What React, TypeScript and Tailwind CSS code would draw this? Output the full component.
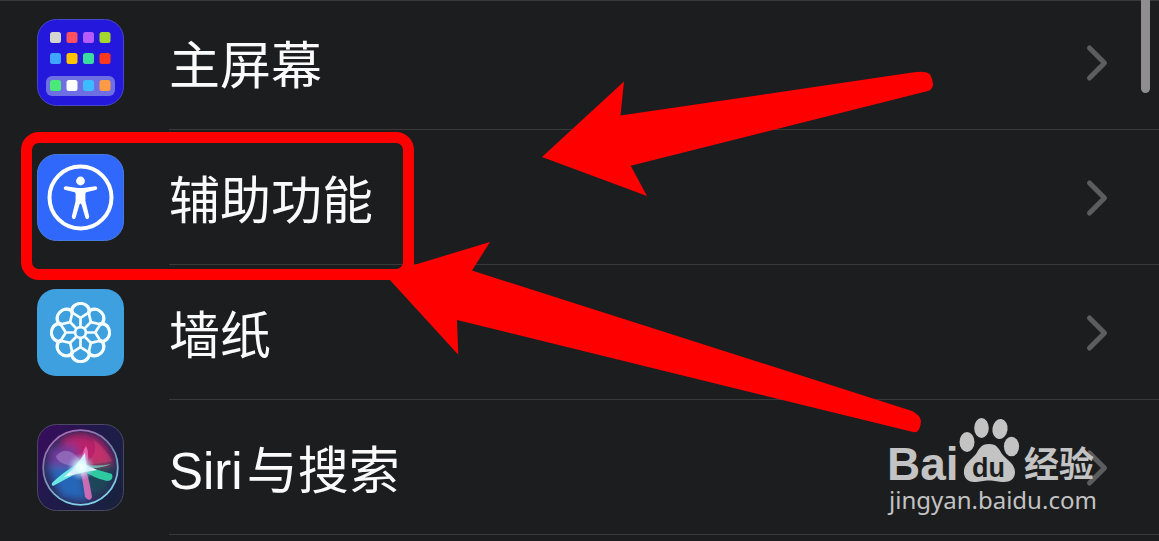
import type { ReactNode } from "react";

function HomeScreenIcon() {
  const colors = [
    ["#d3d6cf", "#ff4f62", "#b65cff", "#a3d82f"],
    ["#3fa6ff", "#ffc400", "#3bdca0", "#ff3a1c"],
    ["#4be87a", "#ffffff", "#3cbcff", "#ff9a45"],
  ];
  const tops = [13, 34, 61];
  return (
    <svg viewBox="0 0 87 87" className="size-full" aria-hidden="true">
      <rect x="0.5" y="0.5" width="86" height="86" rx="19" fill="#2418dc" stroke="#4648c8" />
      <rect x="9" y="57" width="69" height="20" rx="6" fill="#6f6fe4" />
      {colors.map((row, r) =>
        row.map((c, i) => (
          <rect key={`${r}-${i}`} x={13 + i * 16.5} y={tops[r]} width="11" height="11" rx="2.5" fill={c} />
        )),
      )}
    </svg>
  );
}

function AccessibilityIcon() {
  return (
    <svg viewBox="0 0 87 87" className="size-full" aria-hidden="true">
      <rect x="0.5" y="0.5" width="86" height="86" rx="19" fill="#2f68fb" stroke="#4a7ae0" />
      <circle cx="43.5" cy="43.5" r="31" fill="none" stroke="#fff" strokeWidth="4" />
      <circle cx="43.5" cy="27" r="4.4" fill="#fff" />
      <path
        d="M29 32.2 L39 33.8 Q43.5 34.4 48 33.8 L58 32.2 Q60.6 32.4 60.2 34.6 Q60 35.8 58.6 36.1 L49.2 38.3 Q48.4 38.7 48.4 40 V47 L52.2 62.6 Q52.2 65 50.3 65.2 Q48.9 65.2 48.4 63.8 L44.5 50.4 Q43.5 48.8 42.5 50.4 L38.6 63.8 Q38.1 65.2 36.7 65.2 Q34.8 65 34.8 62.6 L38.6 47 V40 Q38.6 38.7 37.8 38.3 L28.4 36.1 Q27 35.8 26.8 34.6 Q26.4 32.4 29 32.2 Z"
        fill="#fff"
      />
    </svg>
  );
}

function WallpaperIcon() {
  const angles = [0, 45, 90, 135, 180, 225, 270, 315];
  return (
    <svg viewBox="0 0 87 87" className="size-full" aria-hidden="true">
      <rect width="87" height="87" rx="19" fill="#3fa0df" />
      <g fill="none" stroke="#f4fdff" strokeWidth="2.7" strokeLinejoin="round">
        {angles.map((a) => (
          <path
            key={a}
            transform={`translate(43.5 43.5) rotate(${a})`}
            d="M0 -5.4 V-14.8 M-10.4 -10.4 L-8.5 -18.5 A8.7 8.7 0 1 1 8.5 -18.5 L10.4 -10.4"
          />
        ))}
        {angles.map((a) => (
          <path
            key={`lobe-${a}`}
            transform={`translate(43.5 43.5) rotate(${a})`}
            d="M-8.6 -19 C-10.4 -25 -6 -29 0 -29 S10.4 -25 8.6 -19"
          />
        ))}
        <circle r="5.4" cx="43.5" cy="43.5" />
      </g>
    </svg>
  );
}

function SiriIcon() {
  return (
    <svg viewBox="0 0 87 87" className="size-full" aria-hidden="true">
      <defs>
        <linearGradient id="siri-bg" x1="0" y1="0" x2="1" y2="0.7">
          <stop offset="0" stopColor="#3b0a5e" />
          <stop offset="0.5" stopColor="#201a4c" />
          <stop offset="1" stopColor="#19213f" />
        </linearGradient>
        <linearGradient id="siri-rim" x1="0" y1="0" x2="0.4" y2="1">
          <stop offset="0" stopColor="#bd65bd" />
          <stop offset="0.5" stopColor="#7382a5" />
          <stop offset="1" stopColor="#7dd2e6" />
        </linearGradient>
        <radialGradient id="siri-core">
          <stop offset="0" stopColor="#fff" />
          <stop offset="0.35" stopColor="#d9fffa" stopOpacity="0.85" />
          <stop offset="1" stopColor="#9af" stopOpacity="0" />
        </radialGradient>
        <filter id="siri-soft" x="-40%" y="-40%" width="180%" height="180%">
          <feGaussianBlur stdDeviation="4" />
        </filter>
        <filter id="siri-fine" x="-20%" y="-20%" width="140%" height="140%">
          <feGaussianBlur stdDeviation="0.7" />
        </filter>
        <clipPath id="siri-orb">
          <circle cx="43.5" cy="43.5" r="36" />
        </clipPath>
      </defs>
      <rect x="0.5" y="0.5" width="86" height="86" rx="19" fill="url(#siri-bg)" stroke="#4b4862" />
      <circle cx="43.5" cy="43.5" r="37" fill="#2c2556" />
      <g clipPath="url(#siri-orb)">
        <g filter="url(#siri-soft)">
          <path d="M22 16 Q45 2 66 18 L77 38 L45 42 Z" fill="#b8236a" />
          <path d="M12 24 L38 20 L44 43 L12 50 Z" fill="#6f3a9c" />
          <path d="M9 42 L43 42 L52 78 L24 74 Z" fill="#2566b8" />
          <path d="M43 43 L78 38 L72 66 L55 74 Z" fill="#1f4658" />
        </g>
        <g filter="url(#siri-fine)">
          <path d="M43 43 Q20 41 19 32 Q30 20 43 36 Z" fill="#b59ad6" opacity="0.45" />
          <path d="M44 42 Q62 40 75 37 Q70 26 56 15 Q64 30 44 42 Z" fill="#d2406f" opacity="0.45" />
          <path d="M42 43 Q46 26 49 22 Q53 28 49 45 Q53 60 55 73 Q53 79 48 73 Q46 56 42 43 Z" fill="#f174c0" opacity="0.8" />
          <path d="M44 40 Q60 46 75 50 Q77 57 70 57 Q56 54 44 45 Z" fill="#2fc9a0" />
          <path d="M47 40 Q59 43 74 40 Q65 45 48 44 Z" fill="#79dfc8" opacity="0.7" />
          <path d="M47 46 Q34 52 16 62 Q14 61 15 59 Q25 49 43 38 Z" fill="#6ce9e4" />
          <path d="M38 43 L48 29 L49 41 L60 46 L48 48 L27 53 Z" fill="#efffff" />
        </g>
        <circle cx="44" cy="43" r="14" fill="url(#siri-core)" />
      </g>
      <circle cx="43.5" cy="43.5" r="37.3" fill="none" stroke="url(#siri-rim)" strokeWidth="1.8" />
    </svg>
  );
}

function Chevron() {
  return (
    <svg viewBox="0 0 24 38" className="h-[38px] w-6 shrink-0" aria-hidden="true">
      <path d="M4.5 4 L19.5 19 L4.5 34" fill="none" stroke="#5d5d60" strokeWidth="5" strokeLinecap="round" strokeLinejoin="round" />
    </svg>
  );
}

function SettingsRow({ icon, label, children }: { icon: ReactNode; label: ReactNode; children?: ReactNode }) {
  return (
    <li className="relative first:-mt-[5px]">
      <a href="#" className="flex items-stretch pl-[37px]">
        <span className="mt-6 mb-6 size-[87px] shrink-0">{icon}</span>
        <span className="ml-[45px] flex flex-1 items-center justify-between border-b border-[#38393b] pt-px pr-[50px]">
          <span className="flex gap-1 pt-2 text-[51px] leading-[60px] whitespace-nowrap text-[#fafafa]">{label}</span>
          <Chevron />
        </span>
      </a>
      {children}
    </li>
  );
}

function Arrows() {
  return (
    <svg width="960" height="460" viewBox="0 0 960 460" className="pointer-events-none absolute top-0 left-0 max-w-none" aria-hidden="true">
      <g fill="#ff0000">
        <path d="M542 157 L624 81.5 L620.5 115.5 L914 72.3 Q925 70.5 929.5 74 Q932.5 77.5 933 85 Q932.5 90 927 91.3 L630.7 165.7 L647 196 Z" />
        <path d="M389 279 L404 268 L490 242 L472 270.5 L912 411 Q920.5 415.5 921 421 Q920.5 429 917 431.8 Q914.5 432.8 911 431.6 L457 320 L458.3 354.7 Z" />
      </g>
    </svg>
  );
}

function Watermark() {
  return (
    <div className="pointer-events-none absolute right-[65px] bottom-[18px] w-[205px] text-[#c3c3c3]">
      <div className="relative flex h-[66px] items-end justify-between">
        <span className="-ml-[2px] text-[46px] leading-[38px] font-bold">Bai</span>
        <svg width="62" height="66" viewBox="0 0 62 66" className="absolute top-0 left-[70px]" aria-hidden="true">
          <g fill="#c3c3c3">
            <ellipse cx="8" cy="25" rx="7.5" ry="10" />
            <ellipse cx="22.5" cy="11" rx="7.3" ry="10" />
            <ellipse cx="41" cy="12" rx="7.6" ry="10" transform="rotate(8 41 12)" />
            <ellipse cx="52.5" cy="29.5" rx="7.6" ry="9.8" />
            <path d="M30 27 C38 27 40 32 43 37 C48 43 56 47 56 55 C56 62 51 65 45 65 C39 65 36 63.5 30 63.5 C24 63.5 21 65 15 65 C9 65 4 61 5 53 C6 46 12 43 17 37 C20 32 22 27 30 27 Z" />
          </g>
        </svg>
        <span className="absolute bottom-px left-[83px] text-[27px] leading-[28px] font-bold text-[#1c1d1f]">du</span>
        <span className="text-[35px] leading-[36px] font-bold">经验</span>
      </div>
      <div className="font-['Noto_Sans',sans-serif] text-[24px] leading-[34px] whitespace-nowrap">jingyan.baidu.com</div>
    </div>
  );
}

export default function App() {
  return (
    <main className="relative min-h-screen overflow-hidden bg-[#1c1d1f] font-['Liberation_Sans','Noto_Sans_CJK_SC',sans-serif]">
      <div className="absolute inset-x-0 top-0 h-px bg-[#38393b]" />
      <ul className="flex flex-col">
        <SettingsRow icon={<HomeScreenIcon />} label="主屏幕" />
        <SettingsRow icon={<AccessibilityIcon />} label="辅助功能">
          <div className="absolute top-[2px] left-[21px] h-[148px] w-[393px] rounded-[18px] border-[11px] border-[#ff0000]" />
        </SettingsRow>
        <SettingsRow icon={<WallpaperIcon />} label="墙纸" />
        <SettingsRow
          icon={<SiriIcon />}
          label={
            <>
              <span>Siri</span>
              <span>与搜索</span>
            </>
          }
        >
          <Watermark />
        </SettingsRow>
      </ul>
      <div className="absolute top-0 right-[9px] h-[93px] w-[9px] rounded-b-full bg-[#8e8e90]" />
      <Arrows />
    </main>
  );
}
